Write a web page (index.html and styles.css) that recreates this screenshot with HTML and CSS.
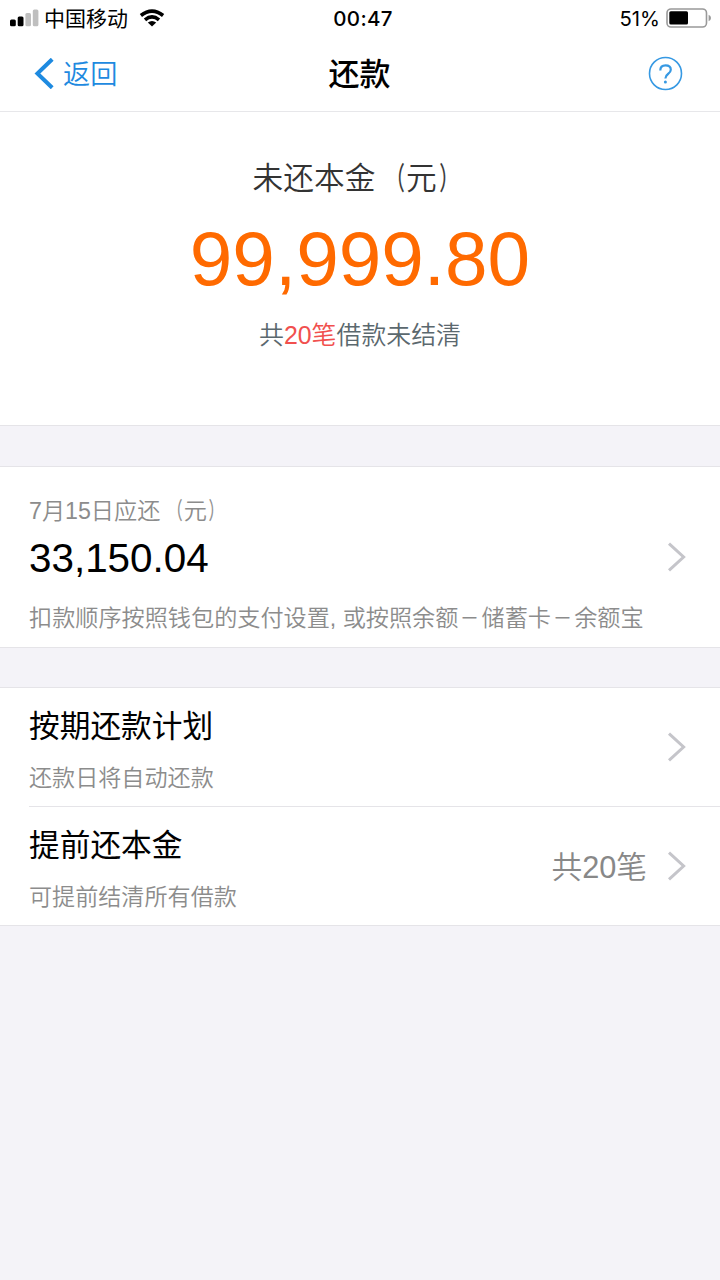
FILE: index.html
```html
<!DOCTYPE html>
<html lang="zh-CN">
<head>
<meta charset="utf-8">
<title>还款</title>
<link rel="stylesheet" href="styles.css">
</head>
<body>
<div class="status">
  <div class="status-left">
    <svg class="signal" width="29" height="18" viewBox="0 0 29 18"><rect x="0" y="10.5" width="5.8" height="6.7" rx="1.5"/><rect x="7.7" y="7.5" width="5.8" height="9.7" rx="1.5"/><g fill="#bfbfbf"><rect x="15.4" y="4" width="5.6" height="13.2" rx="1.5"/><rect x="22.8" y="0.5" width="5.6" height="16.7" rx="1.5"/></g></svg>
    <span class="carrier">中国移动</span>
    <svg class="wifi" width="26" height="18" viewBox="0 0 26 18"><g fill="none" stroke="#000" stroke-width="3.6"><path d="M1.9 6.5Q13 -2.2 24.1 6.5"/><path d="M6 10.9Q13 5 20 10.9"/></g><path d="M8.8 13.6Q13 10.3 17.2 13.6L13 17.4Z"/></svg>
  </div>
  <div class="time">00:47</div>
  <div class="status-right">
    <span class="percent">51%</span>
    <svg width="46" height="20" viewBox="0 0 46 20"><rect x="1" y="1" width="39.5" height="18" rx="4" fill="#fff" stroke="#999" stroke-width="1.6"/><rect x="3.3" y="3.3" width="18.7" height="13.2" rx="1.5"/><path d="M42.6 6.8Q45 7.8 45 10T42.6 13.2Z" fill="#999"/></svg>
  </div>
</div>
<header class="nav">
  <div class="back"><svg width="21" height="31" viewBox="0 0 21 31"><path d="M18.2 1.2L3.4 15.5L18.2 29.8" fill="none" stroke="#1e8ae0" stroke-width="4"/></svg><span>返回</span></div>
  <h1 class="title">还款</h1>
  <div class="help"><svg width="35" height="35" viewBox="0 0 35 35"><circle cx="17.5" cy="17.5" r="16" fill="none" stroke="#3699e3" stroke-width="1.6"/><path d="M12.3 14.4Q12.3 9.4 17.5 9.4Q22.8 9.4 22.8 13.8Q22.8 16 20 18Q17.4 19.8 17.4 22.6" fill="none" stroke="#3699e3" stroke-width="2.2"/><circle cx="17.4" cy="26" r="1.5" fill="#3699e3"/></svg></div>
</header>
<section class="summary">
  <div class="summary-label">未还本金<span class="paren open">（</span>元<span class="paren close">）</span></div>
  <div class="summary-amount">99,999.80</div>
  <div class="summary-note">共<span class="count">20笔</span>借款未结清</div>
</section>
<section class="card due">
  <div class="text">
    <div class="due-label">7月15日应还<span class="paren open">（</span>元<span class="paren close">）</span></div>
    <div class="due-amount">33,150.04</div>
    <div class="due-note">扣款顺序按照钱包的支付设置, 或按照余额<span class="dash">－</span>储蓄卡<span class="dash">－</span>余额宝</div>
  </div>
  <svg class="chevron" width="20" height="32" viewBox="0 0 20 32"><path d="M2 2.7L16.6 16L2 29.3"/></svg>
</section>
<section class="card list">
  <div class="row">
    <div class="text"><div class="row-title">按期还款计划</div><div class="row-note">还款日将自动还款</div></div>
    <svg class="chevron" width="20" height="32" viewBox="0 0 20 32"><path d="M2 2.7L16.6 16L2 29.3"/></svg>
  </div>
  <div class="row">
    <div class="text"><div class="row-title">提前还本金</div><div class="row-note">可提前结清所有借款</div></div>
    <div class="row-value">共20笔</div>
    <svg class="chevron" width="20" height="32" viewBox="0 0 20 32"><path d="M2 2.7L16.6 16L2 29.3"/></svg>
  </div>
</section>
</body>
</html>
```

FILE: styles.css
```css
* { box-sizing: border-box; }
body {
  margin: 0;
  min-height: 1280px;
  background: #f4f3f8;
  color: #000;
  font-family: "Liberation Sans", "Noto Sans CJK SC", sans-serif;
  font-weight: 350;
}
svg { display: block; flex: none; }
.status {
  display: grid;
  grid-template-columns: 1fr auto 1fr;
  align-items: start;
  height: 36px;
  padding: 0 8px 0 10px;
  background: #fff;
  font-size: 21px;
  line-height: 36px;
}
.status-left, .status-right { display: flex; align-items: center; height: 36px; }
.signal, .wifi { margin-top: -1px; }
.carrier { margin: 0 11px 0 5px; padding-top: 1px; font-weight: 400; }
.time { padding: 1px 0 0 4px; font: 500 20.5px/36px Inter, sans-serif; letter-spacing: 0.3px; }
.status-right { justify-content: flex-end; gap: 6px; font-family: Inter, sans-serif; font-size: 20.3px; font-weight: 400; }
.percent { padding-top: 1px; }
.nav {
  display: grid;
  grid-template-columns: 1fr auto 1fr;
  align-items: center;
  height: 76px;
  padding: 0 37px 0 34px;
  background: #fff;
  border-bottom: 1px solid #e7e7ea;
}
.back { display: flex; align-items: center; gap: 8px; color: #1e8ae0; font-size: 27.2px; line-height: 40px; }
.back span { padding-top: 2px; }
.title { margin: 0; padding: 2px 0 0 2px; font-size: 31px; font-weight: 500; line-height: 40px; }
.help { justify-self: end; }
.paren, .dash { display: inline-block; }
.paren { font-weight: 400; -webkit-text-stroke: 0.3px currentColor; }
.open { transform: translateX(-0.03em) scaleX(0.6); transform-origin: right; }
.close { transform: translateX(0.08em) scaleX(0.6); transform-origin: left; }
.dash { transform: scaleX(0.82); }
.summary {
  height: 314px;
  padding-top: 44px;
  background: #fff;
  border-bottom: 1px solid #e5e4e8;
  text-align: center;
}
.summary-label { font-size: 30.7px; line-height: 46px; color: #333; }
.summary-amount { margin-top: 12px; font-size: 76.5px; line-height: 90px; color: #ff6a00; }
.summary-note { margin-top: 11px; font-size: 24.9px; line-height: 40px; color: #5b686e; }
.count { color: #f1504e; }
.card {
  background: #fff;
  border-top: 1px solid #e5e4e8;
  border-bottom: 1px solid #e5e4e8;
}
.due, .row { display: flex; align-items: center; }
.text { flex: 1; min-width: 0; }
.chevron { fill: none; stroke: #c5c5ca; stroke-width: 3; }
.due { height: 182px; margin-top: 40px; padding: 0 33px 0 29px; }
.due .text { white-space: nowrap; }
.due-label { margin-top: 14px; font-size: 23.2px; line-height: 34px; color: #8c8c8c; }
.due-amount { margin-top: 5px; font-size: 40.4px; line-height: 50px; }
.due-note { margin-top: 18px; font-size: 23.15px; line-height: 34px; color: #8c8c8c; }
.list { margin-top: 39px; padding-left: 29px; }
.row { height: 118px; padding-right: 33px; }
.row .text { padding-top: 5px; }
.row + .row { height: 119px; border-top: 1px solid #e5e4e8; }
.row-title { font-size: 30.7px; line-height: 44px; font-weight: 400; }
.row-note { margin-top: 12px; font-size: 23.1px; line-height: 34px; color: #8c8c8c; }
.row-value { margin-right: 20px; padding-top: 4px; font-size: 30.7px; line-height: 44px; color: #888; }
```
